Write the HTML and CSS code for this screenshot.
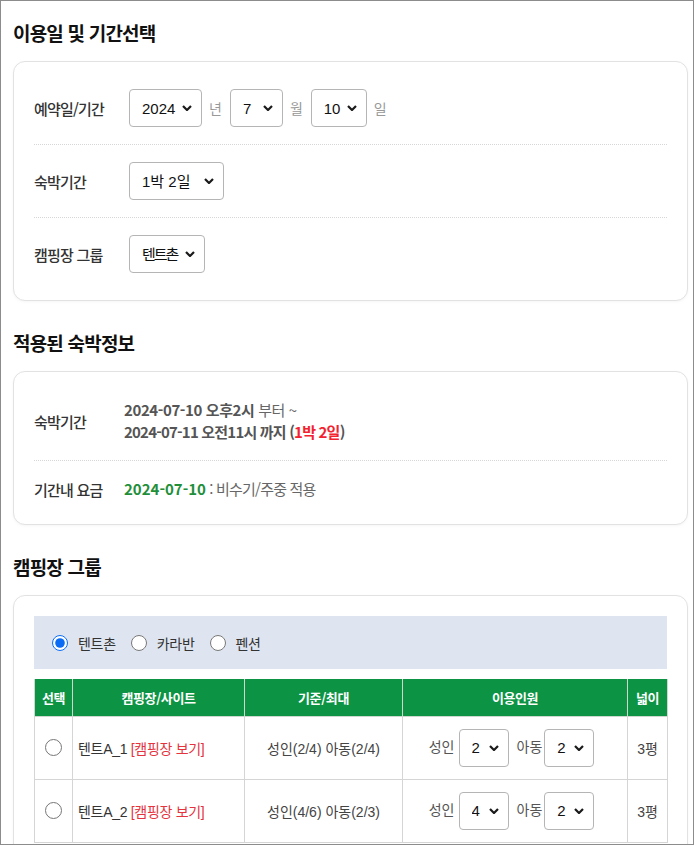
FILE: index.html
```html
<!DOCTYPE html>
<html lang="ko">
<head>
<meta charset="utf-8">
<title>이용일 및 기간선택</title>
<link rel="stylesheet" href="styles.css">
</head>
<body>
<div class="frame">
  <div class="content">
    <h2 class="sec-title">이용일 및 기간선택</h2>
    <div class="card card-form">
      <div class="row">
        <div class="label">예약일/기간</div>
        <div class="field">
          <span class="sel sel-year"><select><option>2024</option></select><svg class="chev" viewBox="0 0 10 6"><path d="M1 1l4 4 4-4"/></svg></span>
          <span class="unit">년</span>
          <span class="sel sel-month"><select><option>7</option></select><svg class="chev" viewBox="0 0 10 6"><path d="M1 1l4 4 4-4"/></svg></span>
          <span class="unit">월</span>
          <span class="sel sel-day"><select><option>10</option></select><svg class="chev" viewBox="0 0 10 6"><path d="M1 1l4 4 4-4"/></svg></span>
          <span class="unit">일</span>
        </div>
      </div>
      <div class="row">
        <div class="label">숙박기간</div>
        <div class="field">
          <span class="sel sel-stay"><select><option>1박 2일</option></select><svg class="chev" viewBox="0 0 10 6"><path d="M1 1l4 4 4-4"/></svg></span>
        </div>
      </div>
      <div class="row">
        <div class="label">캠핑장 그룹</div>
        <div class="field">
          <span class="sel sel-group"><select><option>텐트촌</option></select><svg class="chev" viewBox="0 0 10 6"><path d="M1 1l4 4 4-4"/></svg></span>
        </div>
      </div>
    </div>

    <h2 class="sec-title">적용된 숙박정보</h2>
    <div class="card card-info">
      <div class="row">
        <div class="label label-info">숙박기간</div>
        <div class="value">
          <div class="line"><b>2024-07-10 오후2시</b> 부터 ~</div>
          <div class="line line-tight"><b>2024-07-11 오전11시 까지 (<span class="red">1박 2일</span>)</b></div>
        </div>
      </div>
      <div class="row">
        <div class="label label-info">기간내 요금</div>
        <div class="value">
          <div class="line line-tight"><b class="green">2024-07-10</b> : 비수기/주중 적용</div>
        </div>
      </div>
    </div>

    <h2 class="sec-title">캠핑장 그룹</h2>
    <div class="card card-group">
      <div class="radio-bar">
        <label class="radio"><input type="radio" name="grp" checked>텐트촌</label>
        <label class="radio"><input type="radio" name="grp">카라반</label>
        <label class="radio"><input type="radio" name="grp">펜션</label>
      </div>
      <table class="sites">
        <colgroup>
          <col class="c1"><col class="c2"><col class="c3"><col class="c4"><col class="c5">
        </colgroup>
        <thead>
          <tr><th>선택</th><th>캠핑장/사이트</th><th>기준/최대</th><th>이용인원</th><th>넓이</th></tr>
        </thead>
        <tbody>
          <tr>
            <td class="center"><input type="radio" name="site" class="site-radio"></td>
            <td class="name">텐트A_1 <a class="view">[캠핑장 보기]</a></td>
            <td class="center muted">성인(2/4) 아동(2/4)</td>
            <td>
              <div class="people">
                <span class="plabel">성인</span>
                <span class="sel sel-num"><select><option>2</option></select><svg class="chev" viewBox="0 0 10 6"><path d="M1 1l4 4 4-4"/></svg></span>
                <span class="plabel plabel-2">아동</span>
                <span class="sel sel-num"><select><option>2</option></select><svg class="chev" viewBox="0 0 10 6"><path d="M1 1l4 4 4-4"/></svg></span>
              </div>
            </td>
            <td class="center muted">3평</td>
          </tr>
          <tr>
            <td class="center"><input type="radio" name="site" class="site-radio"></td>
            <td class="name">텐트A_2 <a class="view">[캠핑장 보기]</a></td>
            <td class="center muted">성인(4/6) 아동(2/3)</td>
            <td>
              <div class="people">
                <span class="plabel">성인</span>
                <span class="sel sel-num"><select><option>4</option></select><svg class="chev" viewBox="0 0 10 6"><path d="M1 1l4 4 4-4"/></svg></span>
                <span class="plabel plabel-2">아동</span>
                <span class="sel sel-num"><select><option>2</option></select><svg class="chev" viewBox="0 0 10 6"><path d="M1 1l4 4 4-4"/></svg></span>
              </div>
            </td>
            <td class="center muted">3평</td>
          </tr>
        </tbody>
      </table>
    </div>
  </div>
</div>
</body>
</html>
```

FILE: styles.css
```css
* { box-sizing: border-box; }
html, body { margin: 0; padding: 0; background: #fff; }
body {
  font-family: "Noto Sans CJK KR", "Noto Sans", sans-serif;
  color: #222;
  font-size: 14px;
}
.frame {
  width: 694px;
  height: 845px;
  border: 1px solid #8c8c8c;
  overflow: hidden;
  padding: 18px 0 0 12px;
}
.content { width: 675px; }

.sec-title {
  margin: 0 0 14px 0;
  font-size: 19px;
  line-height: 28px;
  font-weight: 700;
  color: #111;
  letter-spacing: -0.8px;
}
.card + .sec-title { margin-top: 28px; }

.card {
  border: 1px solid #e2e2e2;
  border-radius: 12px;
  background: #fff;
  box-shadow: 0 1px 3px rgba(0,0,0,0.04);
}
.card-form { padding: 10px 20px; }
.card-info { padding: 10px 20px 7px; }
.row {
  display: flex;
  align-items: center;
  padding: 17px 0;
  border-bottom: 1px dotted #d6d6d6;
}
.row:last-child { border-bottom: none; }
.label {
  width: 95px;
  flex: none;
  font-size: 15px;
  font-weight: 500;
  color: #333;
  letter-spacing: -0.8px;
}
.label-info { width: 90px; }
.field { display: flex; align-items: center; }

.sel { position: relative; display: inline-block; }
.sel select {
  -webkit-appearance: none;
  appearance: none;
  height: 38px;
  border: 1px solid #b5b5b5;
  border-radius: 4px;
  background: #fff;
  font-family: "Liberation Sans", "Noto Sans CJK KR", sans-serif;
  font-size: 15px;
  color: #111;
  padding: 0 0 0 12px;
  display: block;
}
.chev {
  position: absolute;
  right: 10px;
  top: 50%;
  width: 10px;
  height: 6px;
  margin-top: -3px;
  fill: none;
  stroke: #1a1a1a;
  stroke-width: 2.2;
  pointer-events: none;
}
.sel-year select { width: 73px; }
.sel-month select { width: 53px; }
.sel-day select { width: 56px; }
.sel-stay select { width: 95px; }
.sel-group select { width: 76px; letter-spacing: -2px; }
.sel-num select { width: 50px; }
.unit { color: #999; font-size: 14px; margin: 0 8px 0 7px; }

.value { font-size: 15px; color: #666; letter-spacing: -0.4px; }
.value .line { line-height: 22px; }
.value .line-tight { letter-spacing: -0.8px; }
.value b { color: #555; font-weight: 700; }
.value .red { color: #f2222e; }
.value .green { color: #1f8f3a; letter-spacing: 0; }

.card-group { padding: 20px; }
.radio-bar {
  background: #dfe5f0;
  height: 53px;
  display: flex;
  align-items: center;
  padding-left: 13px;
  font-size: 14px;
  color: #333;
}
.radio { display: inline-flex; align-items: center; margin-right: 10px; letter-spacing: -0.3px; }
.radio input {
  width: 16px; height: 16px;
  margin: 0 10px 0 5px;
  accent-color: #0a6cf5;
}

.sites {
  width: 100%;
  margin-top: 10px;
  border-collapse: collapse;
  table-layout: fixed;
  font-size: 14px;
}
.c1 { width: 38px; }
.c2 { width: 172px; }
.c3 { width: 158px; }
.c4 { width: 225px; }
.c5 { width: 40px; }
.sites th {
  background: #0c9444;
  color: #fff;
  font-size: 13px;
  font-weight: 700;
  height: 37px;
  padding: 0;
  border: 1px solid #cfd8cf;
  border-top: none;
  letter-spacing: -0.4px;
}
.sites td {
  border: 1px solid #d5d5d5;
  height: 63px;
  padding: 0 5px;
  color: #333;
  font-family: "Liberation Sans", "Noto Sans CJK KR", sans-serif;
}
.sites td.center { text-align: center; }
.sites td.muted { color: #444; }
.site-radio { width: 17px; height: 17px; margin: 0; vertical-align: middle; }
.name { letter-spacing: -0.3px; }
.view { color: #e5333d; text-decoration: none; }
.people {
  display: flex;
  align-items: center;
  justify-content: center;
  white-space: nowrap;
  padding-right: 7px;
}
.people .plabel { color: #555; margin-right: 4px; padding-bottom: 4px; }
.people .plabel-2 { margin: 0 2px 0 8px; }
```
